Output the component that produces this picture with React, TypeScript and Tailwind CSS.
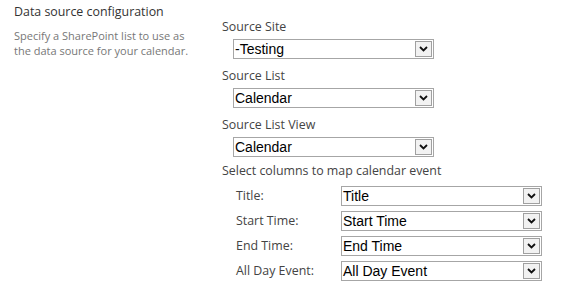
import React from 'react';

function Chevron() {
  return (
    <svg width="9" height="6" viewBox="0 0 9 6" className="block">
      <path d="M1 1 L4.5 4.5 L8 1" fill="none" stroke="#111" strokeWidth="1.8" />
    </svg>
  );
}

function Dropdown({ value }: { value: string }) {
  return (
    <div className="flex h-[20px] w-[201px] items-center border border-[#a6a6a6] bg-white pl-[1px] pr-[1px]">
      <span className="flex-1 font-['Liberation_Sans',Arial,sans-serif] text-[14px] leading-none text-black">
        {value}
      </span>
      <span className="flex h-[16px] w-[17px] items-center justify-center border border-[#a0a0a0] bg-[#f2f2f2]">
        <Chevron />
      </span>
    </div>
  );
}

function Field({ label, value }: { label: string; value: string }) {
  return (
    <div className="mb-[8px]">
      <div className="text-[12.4px] leading-[18px] text-[#444]">{label}</div>
      <div className="mt-[3px] pl-[11px]">
        <Dropdown value={value} />
      </div>
    </div>
  );
}

const columns = [
  ['Title:', 'Title'],
  ['Start Time:', 'Start Time'],
  ['End Time:', 'End Time'],
  ['All Day Event:', 'All Day Event'],
];

export default function App() {
  return (
    <div className="flex h-[296px] w-[572px] bg-white font-['Open_Sans','Noto_Sans',sans-serif]">
      <div className="w-[222px] shrink-0 pl-[14px] pt-[3px]">
        <div className="text-[12.4px] leading-[18px] text-[#333]">Data source configuration</div>
        <div className="mt-[7px] w-[190px] text-[11px] leading-[15px] text-[#777]">
          Specify a SharePoint list to use as the data source for your calendar.
        </div>
      </div>
      <div className="flex-1 pt-[18px]">
        <Field label="Source Site" value="-Testing" />
        <Field label="Source List" value="Calendar" />
        <Field label="Source List View" value="Calendar" />
        <div className="-mt-[3px] text-[12.4px] leading-[18px] text-[#444]">Select columns to map calendar event</div>
        <div className="mt-[6px] flex flex-col gap-[5px] pl-[14px]">
          {columns.map(([label, value]) => (
            <div key={label} className="flex items-center">
              <span className="w-[105px] text-[12.4px] text-[#444]">{label}</span>
              <Dropdown value={value} />
            </div>
          ))}
        </div>
      </div>
    </div>
  );
}
